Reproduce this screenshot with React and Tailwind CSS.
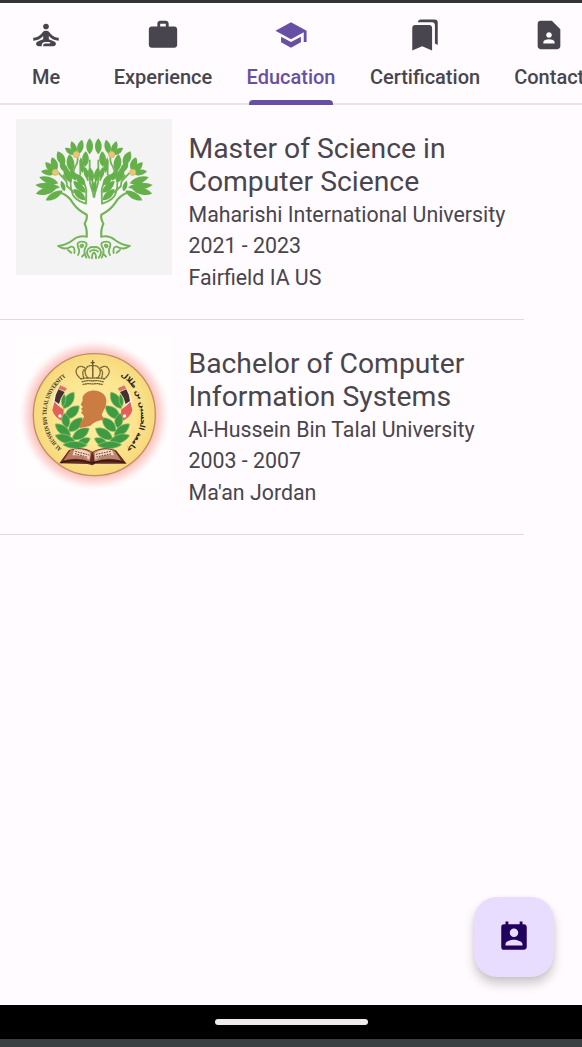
import React from "react";
import {
  MdSelfImprovement,
  MdWork,
  MdSchool,
  MdBookmarks,
  MdContactPage,
  MdPermContactCalendar,
} from "react-icons/md";

const tabs = [
  { label: "Me", Icon: MdSelfImprovement, width: "w-[92px]" },
  { label: "Experience", Icon: MdWork, width: "w-[142px]" },
  { label: "Education", Icon: MdSchool, width: "w-[114px]", active: true },
  { label: "Certification", Icon: MdBookmarks, width: "w-[154px]" },
  { label: "Contact", Icon: MdContactPage, width: "w-[94.5px]" },
];

// Leaf shape between two points, bulging by w on both sides.
function leaf(x1, y1, x2, y2, w) {
  const dx = x2 - x1;
  const dy = y2 - y1;
  const l = Math.hypot(dx, dy);
  const nx = (-dy / l) * w;
  const ny = (dx / l) * w;
  const c = (t, s) => `${x1 + dx * t + nx * s} ${y1 + dy * t + ny * s}`;
  return `M${x1} ${y1}C${c(0.3, 1)} ${c(0.75, 0.9)} ${x2} ${y2}C${c(0.75, -0.9)} ${c(0.3, -1)} ${x1} ${y1}Z`;
}

const treeLeaves = [
  [239, 79, 239, 127, 14], [216, 83, 206, 126, 13], [184, 88, 198, 126, 12],
  [165, 108, 196, 129, 11], [143, 118, 163, 160, 16], [126, 136, 140, 176, 14],
  [106, 151, 136, 184, 13], [93, 178, 134, 185, 12], [88, 195, 145, 214, 14],
  [76, 219, 150, 226, 14], [78, 245, 138, 230, 14], [107, 265, 158, 236, 14],
  [150, 150, 172, 182, 13], [178, 127, 185, 180, 16], [227, 118, 226, 164, 14],
  [163, 163, 182, 212, 14], [182, 172, 197, 206, 11], [239, 166, 247, 210, 12],
  [196, 186, 226, 220, 14], [190, 207, 227, 242, 14], [190, 231, 226, 265, 14],
  [224, 164, 233, 202, 10], [212, 136, 218, 184, 8], [154, 206, 164, 238, 9],
  [247, 202, 251, 242, 6],
];

function TreeHalf() {
  return (
    <g stroke="#74b458" strokeWidth="5.5" fill="none" strokeLinecap="round" strokeLinejoin="round">
      <path
        fill="#f8f8f7"
        stroke="none"
        d="M253 256C246 236 234 215 219 188L149 241Q176 250 190 275Q204 295 230 308Q233 318 222 335Q232 352 230 374V384H253Z"
      />
      <path strokeWidth="6.5" d="M149 241Q176 250 190 275Q204 295 230 308Q233 318 224 335Q232 352 230 374" />
      <path fill="#f5f6f3" d="M228 275C215 270 195 265 188 247C178 220 181 198 194 184C207 197 226 208 229 235Z" />
      <path d="M251 255C250 235 239 222 239 204V145M233 204Q229 183 221 174V132M211 188V145M203 137Q204 154 195 164L188 186M160 190Q172 208 171 222L190 240M169 173Q180 192 176 202M147 184L168 207" />
      <path d="M145 402C160 400 180 391 190 383Q207 369 230 374" />
      <path d="M145 402Q163 416 183 404Q196 402 193 423M204 429Q211 419 204 405Q199 389 215 389Q235 389 228 404Q218 415 229 437M211 403Q211 397 218 398Q222 402 214 406M238 437Q224 417 238 408Q245 403 252 406M240 419Q245 413 252 415M246 439Q246 423 252 423M174 414L184 422M222 427L216 434" />
      {treeLeaves.map((p, i) => (
        <path key={i} d={leaf(...p)} fill="#65b04a" stroke="none" />
      ))}
      <circle cx="199" cy="128" r="9.5" fill="#eac576" stroke="#c9bd61" strokeWidth="2" />
      <circle cx="136" cy="181" r="9.5" fill="#eac576" stroke="#c9bd61" strokeWidth="2" />
    </g>
  );
}

function TreeLogo() {
  return (
    <svg viewBox="18 21 468 468" className="block size-39 bg-[#f3f3f3]">
      <TreeHalf />
      <g transform="translate(504 0) scale(-1 1)">
        <TreeHalf />
      </g>
    </svg>
  );
}

const laurel = [
  [192, 192, 160, 242, 19], [163, 198, 158, 236, 9], [208, 234, 164, 272, 20],
  [163, 256, 172, 300, 17], [217, 269, 176, 311, 20], [135, 288, 182, 324, 18],
  [238, 301, 186, 334, 20], [135, 322, 197, 343, 18], [241, 331, 200, 352, 15],
  [158, 350, 232, 352, 15],
];

function EmblemSide() {
  return (
    <g>
      <path d="M151 172L171 180Q156 205 143 242L126 235Q128 198 151 172Z" fill="#f8eee2" />
      <path d="M151 172L171 181L165 190L145 182Z" fill="#dc7565" />
      <path d="M145 184L164 192Q151 209 147 228L134 219Q136 199 145 184Z" fill="#4a302a" />
      <path d="M133 221Q145 235 161 245L160 281Q134 270 127 247Z" fill="#e2605b" />
      <path d="M177 220Q160 300 232 350" fill="none" stroke="#d5dfa0" strokeWidth="3" />
      {laurel.map((p, i) => (
        <path key={i} d={leaf(...p)} fill="#3f9b43" stroke="#a9c773" strokeWidth="2" />
      ))}
      <circle cx="150" cy="264" r="5" fill="#fff" />
    </g>
  );
}

function CrownHalf() {
  return (
    <path
      d="M248 113V149M248 113Q232 111 226 126Q223 139 235 152M226 121Q207 107 199 126Q195 138 213 153M224 125Q214 128 222 152M212 153Q230 148 248 151M215 162Q232 156 248 159M218 170Q232 165 248 168"
      fill="none"
      stroke="#766137"
      strokeWidth="4"
      strokeDasharray="6 0.8"
    />
  );
}

function UniversityEmblem() {
  return (
    <svg viewBox="18 18 468 468" className="block size-39 bg-[#fffdfe]">
      <defs>
        <radialGradient id="glow">
          <stop offset="0.78" stopColor="#f8b9b0" />
          <stop offset="0.84" stopColor="#fbd0cc" />
          <stop offset="0.91" stopColor="#fee9e8" />
          <stop offset="1" stopColor="#fffdfe" stopOpacity="0" />
        </radialGradient>
        <radialGradient id="gold">
          <stop offset="0" stopColor="#fff0a4" />
          <stop offset="0.65" stopColor="#fbe58f" />
          <stop offset="1" stopColor="#f8d97c" />
        </radialGradient>
        <path id="latinArc" d="M155 362A138 138 0 0 1 170 145" />
        <path id="arabicArc" d="M328 139A146 146 0 0 1 339 374" />
      </defs>
      <circle cx="253" cy="261" r="230" fill="url(#glow)" />
      <circle cx="253" cy="260" r="183" fill="url(#gold)" stroke="#c08f62" strokeWidth="4" />
      <text className="font-['Liberation_Serif',serif] text-[18px] font-bold" fill="#25211b">
        <textPath href="#latinArc" textLength="248" lengthAdjust="spacingAndGlyphs">AL HUSSEIN BIN TALAL UNIVERSITY</textPath>
      </text>
      <text className="font-['DejaVu_Sans',sans-serif] text-[22px] font-bold" fill="#25211b">
        <textPath href="#arabicArc" startOffset="5">جامعة الحسين بن طلال</textPath>
      </text>
      <CrownHalf />
      <g transform="translate(496 0) scale(-1 1)">
        <CrownHalf />
      </g>
      <path d="M248 97V111M242 104H254" stroke="#665433" strokeWidth="4" />
      <EmblemSide />
      <g transform="translate(494 0) scale(-1 1)">
        <EmblemSide />
      </g>
      <path d="M218 206C230 182 268 182 283 201C294 214 288 237 281 247L275 260L283 275Q254 278 240 294L209 300C206 284 220 277 222 265L218 259L213 254L218 248L213 243L219 237L212 230Q220 218 218 206Z" fill="#cb7c43" />
      <path d="M148 406L177 366Q218 353 247 371Q280 352 318 367L350 407L256 407L247 412L233 408Z" fill="#632d20" />
      <path d="M181 367Q218 357 245 371L239 401Q204 386 161 397Z" fill="#bf7961" />
      <path d="M250 371Q281 356 314 368L333 397Q290 386 254 401Z" fill="#bd8770" />
      <path d="M193 364Q222 361 240 375L238 395Q215 379 187 382ZM255 375Q277 361 306 366L312 382Q278 378 256 395Z" fill="#f4d5bd" />
      <path d="M196 370L238 381M195 377L234 388M258 379L302 370M259 387L306 377" stroke="#643f32" strokeWidth="3" strokeDasharray="5 3" />
      <path d="M153 404Q207 390 246 405Q291 391 344 404" fill="none" stroke="#2e1915" strokeWidth="4" />
    </svg>
  );
}

const schools = [
  {
    Logo: TreeLogo,
    title: ["Master of Science in", "Computer Science"],
    lines: ["Maharishi International University", "2021 - 2023", "Fairfield IA US"],
  },
  {
    Logo: UniversityEmblem,
    title: ["Bachelor of Computer", "Information Systems"],
    lines: ["Al-Hussein Bin Talal University", "2003 - 2007", "Ma'an Jordan"],
  },
];

export default function App() {
  return (
    <div className="relative flex h-[1047px] w-[582px] flex-col overflow-hidden bg-[#fffbff] font-['Roboto',sans-serif] text-[#49454e]">
      <div className="h-[3px] shrink-0 bg-[#343338]" />
      <nav className="flex h-[102px] shrink-0 overflow-hidden shadow-[inset_0_-2px_0_#e9e3ea]">
        {tabs.map(({ label, Icon, width, active }) => (
          <button
            key={label}
            className={`relative flex shrink-0 flex-col items-center pt-[15px] ${width} ${active ? "text-[#6750a4]" : ""}`}
          >
            <Icon className="size-[34px]" />
            <span className="mt-[11px] text-[20px] leading-7 font-medium whitespace-nowrap">{label}</span>
            {active && <span className="absolute top-[97px] h-[5px] w-[84px] rounded-t-[4px] bg-[#6750a4]" />}
          </button>
        ))}
      </nav>
      <main className="w-[524px] grow">
        {schools.map(({ Logo, title, lines }) => (
          <article key={title[0]} className="flex h-[215px] border-b-[1.5px] border-[#ded8df] pt-[14px] pl-4">
            <Logo />
            <div className="ml-[16.5px] pt-[12.5px]">
              <h2 className="text-[28.3px] leading-[33.3px] whitespace-nowrap">
                {title.map((t) => (
                  <span key={t} className="block">{t}</span>
                ))}
              </h2>
              <div className="pt-[0.5px]">
                {lines.map((t) => (
                  <p key={t} className="text-[21.35px] leading-[31.5px] whitespace-nowrap">{t}</p>
                ))}
              </div>
            </div>
          </article>
        ))}
      </main>
      <button
        aria-label="Contact"
        className="absolute top-[897px] left-[474px] flex size-20 items-center justify-center rounded-[23px] bg-[#e9ddff] text-[#22005d] shadow-[0_7px_11px_rgba(0,0,0,0.2),0_1px_4px_rgba(0,0,0,0.05)]"
      >
        <MdPermContactCalendar className="size-[34px]" />
      </button>
      <footer className="flex h-[34px] shrink-0 items-center justify-center bg-black">
        <div className="h-[6px] w-[153px] rounded-full bg-[#eeeaee]" />
      </footer>
      <div className="h-2 shrink-0 bg-[#3c3f42]" />
    </div>
  );
}
